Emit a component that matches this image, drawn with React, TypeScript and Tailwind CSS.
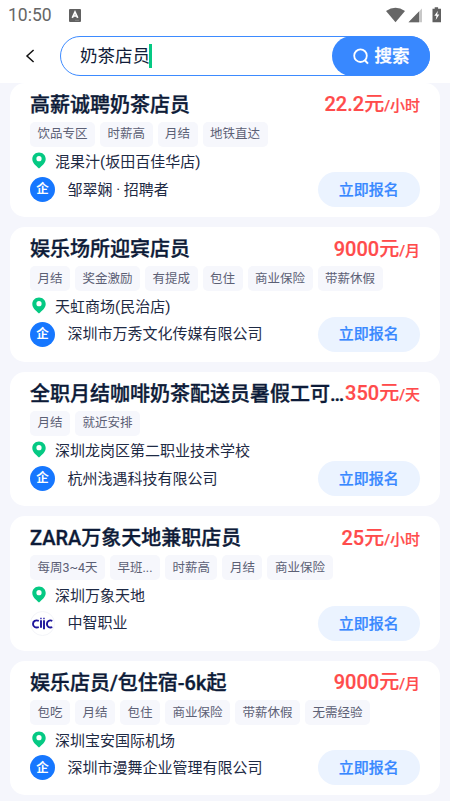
type Job = {
  title: string;
  pay: string;
  unit: string;
  tags: string[];
  place: string;
  company: string;
  logo?: "ciic";
};

const jobs: Job[] = [
  { title: "高薪诚聘奶茶店员", pay: "22.2元", unit: "/小时", tags: ["饮品专区", "时薪高", "月结", "地铁直达"], place: "混果汁(坂田百佳华店)", company: "邹翠娴 · 招聘者" },
  { title: "娱乐场所迎宾店员", pay: "9000元", unit: "/月", tags: ["月结", "奖金激励", "有提成", "包住", "商业保险", "带薪休假"], place: "天虹商场(民治店)", company: "深圳市万秀文化传媒有限公司" },
  { title: "全职月结咖啡奶茶配送员暑假工可…", pay: "350元", unit: "/天", tags: ["月结", "就近安排"], place: "深圳龙岗区第二职业技术学校", company: "杭州浅遇科技有限公司" },
  { title: "ZARA万象天地兼职店员", pay: "25元", unit: "/小时", tags: ["每周3~4天", "早班...", "时薪高", "月结", "商业保险"], place: "深圳万象天地", company: "中智职业", logo: "ciic" },
  { title: "娱乐店员/包住宿-6k起", pay: "9000元", unit: "/月", tags: ["包吃", "月结", "包住", "商业保险", "带薪休假", "无需经验"], place: "深圳宝安国际机场", company: "深圳市漫舞企业管理有限公司" },
];

function StatusBar() {
  return (
    <div className="flex h-[32px] shrink-0 items-center pl-[8px] pr-[8px] text-[#666]">
      <span className="w-[44px] text-[17.5px] leading-none">10:50</span>
      <svg className="ml-[17px] -mt-[2px]" width="12" height="13" viewBox="0 0 12 13">
        <rect width="12" height="13" rx="1" fill="#616161" />
        <path d="M3.300 8.800 L6 3 L8.700 8.800 M4.200 7h3.6" fill="none" stroke="#fff" strokeWidth="1.7" />
        <path d="M6 11.3h4" stroke="#999" strokeWidth=".6" />
      </svg>
      <svg className="ml-auto -mt-[2px]" width="56" height="16" viewBox="0 0 56 16">
        <path d="M0 4 Q9.500 -2.500 19 4 L9.500 15.200Z" fill="#666" />
        <path d="M22.500 15.200 L36 1.500 V15.200Z" fill="#c8c8c8" />
        <path d="M22.500 15.200 L33 4.600 V15.200Z" fill="#666" />
        <path d="M46.500 1.800h2.200V.3h3.400v1.500H55v13.400H46.500Z" fill="#606060" />
        <path d="M52 3.800 L48.300 8.700h2.200l-.8 4.300 3.600-5.500h-2.200Z" fill="#fff" />
      </svg>
    </div>
  );
}

function SearchBar() {
  return (
    <div className="flex h-[50.5px] shrink-0 items-start pl-[25px] pr-[20px] pt-[4px]">
      <svg className="mt-[13px] mr-[25px]" width="10" height="14" viewBox="0 0 10 14">
        <path d="M8.600 1 L2 7 L8.600 13" fill="none" stroke="#111" strokeWidth="1.500" />
      </svg>
      <div className="flex h-[40px] flex-1 items-center justify-between rounded-full border-[1.5px] border-[#3d8bff] bg-white pl-[19px]">
        <div className="flex items-center text-[17.5px] text-[#101c38]">
          奶茶店员
          <span className="-ml-px h-[24px] w-[2.5px] bg-[#05c983]" />
        </div>
        <button className="-my-px -mr-px flex h-[40px] w-[98px] items-center justify-center gap-[6px] rounded-full bg-[#3888ff] text-[17.5px] font-medium text-white [-webkit-text-stroke:0.35px_currentColor]">
          <svg width="16" height="17" viewBox="0 0 16 17">
            <circle cx="7.500" cy="7.700" r="6.300" fill="none" stroke="#fff" strokeWidth="1.800" />
            <path d="M11.600 12 L15 15.600" stroke="#fff" strokeWidth="2" />
          </svg>
          搜索
        </button>
      </div>
    </div>
  );
}

function Logo({ kind }: { kind?: "ciic" }) {
  if (kind === "ciic") {
    return (
      <svg width="25" height="25" viewBox="0 0 25 25">
        <circle cx="12.500" cy="12.500" r="12" fill="#fff" stroke="#f3f4f8" />
        <g fill="none" stroke="#1d159c" strokeWidth="1.900">
          <path d="M8.800 9.800 C5.500 8.600 3 10.300 3 13 S5.500 17.200 8.800 16.200" />
          <path d="M11 9.200v7.600M14 9.200v9" />
          <path d="M22.300 9.800 C19.300 8.600 16.900 10.300 16.900 13 S19.300 17.200 22.300 16.200" />
        </g>
        <path d="M10.100 6.800h1.700v1.500h-1.700ZM13.100 6.800h1.700v1.500h-1.700Z" fill="#4a42b8" />
      </svg>
    );
  }
  return (
    <span className="flex h-[25px] w-[25px] items-center justify-center rounded-full bg-[#1677ff] text-[12.5px] font-bold leading-none text-white">
      企
    </span>
  );
}

function JobCard({ job }: { job: Job }) {
  return (
    <article className="flex h-[134.5px] shrink-0 flex-col rounded-[15px] bg-white px-[20px]">
      <div className="flex h-[39px] items-center justify-between whitespace-nowrap pt-[5px]">
        <h2 className="min-w-0 text-[20px] font-medium leading-[30px] text-[#0d1b38] [-webkit-text-stroke:0.35px_currentColor]">{job.title}</h2>
        <div className="shrink-0 pt-px leading-[30px] text-[#ff4b4b] [-webkit-text-stroke:0.2px_currentColor]">
          <span className="text-[20px] font-medium">{job.pay}</span>
          <span className="text-[15px] font-medium">{job.unit}</span>
        </div>
      </div>
      <div className="flex h-[25px] gap-[5px]">
        {job.tags.map((tag) => (
          <span key={tag} className="flex h-[25px] items-center whitespace-nowrap rounded-[5px] bg-[#f6f7fc] px-[7.5px] pt-px text-[12.5px] text-[#5c6075]">
            {tag}
          </span>
        ))}
      </div>
      <div className="flex h-[25.5px] items-center gap-[9px] pl-[2px] pt-[3px] text-[15px] leading-none text-[#1e2a44]">
        <svg width="14" height="17" viewBox="0 0 14 17">
          <path d="M7 .5 C3.200 .5 .3 3.400 .3 7 C.3 11 3.800 13.500 7 16.500 C10.200 13.500 13.700 11 13.700 7 C13.700 3.400 10.800 .5 7 .5Z" fill="#05c983" />
          <circle cx="7" cy="6.700" r="2.600" fill="#fff" />
        </svg>
        <span className="pt-[4px]">{job.place}</span>
      </div>
      <div className="flex h-[35px] items-center">
        <Logo kind={job.logo} />
        <span className="ml-[12.5px] pt-px text-[15px] leading-none text-[#1e2a44]">{job.company}</span>
        <button className="ml-auto h-[35px] w-[102.5px] rounded-full bg-[#ebf3ff] pt-px text-[15px] font-medium text-[#3888ff] [-webkit-text-stroke:0.2px_currentColor]">立即报名</button>
      </div>
    </article>
  );
}

export default function App() {
  return (
    <div className="flex h-[801px] w-[450px] flex-col overflow-hidden bg-white font-[Roboto,'Noto_Sans_CJK_SC',sans-serif]">
      <StatusBar />
      <SearchBar />
      <main className="flex flex-1 flex-col gap-[10.1px] overflow-hidden bg-[#f5f6fc] px-[10px]">
        {jobs.map((job) => (
          <JobCard key={job.title} job={job} />
        ))}
      </main>
    </div>
  );
}
